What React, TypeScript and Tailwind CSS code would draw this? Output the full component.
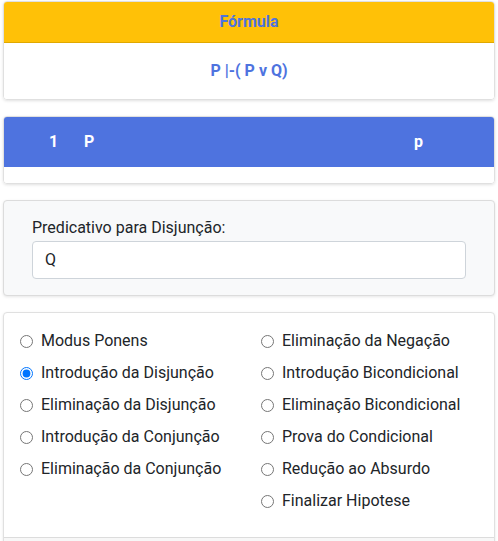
import React from "react";

const left = [
  "Modus Ponens",
  "Introdução da Disjunção",
  "Eliminação da Disjunção",
  "Introdução da Conjunção",
  "Eliminação da Conjunção",
];
const right = [
  "Eliminação da Negação",
  "Introdução Bicondicional",
  "Eliminação Bicondicional",
  "Prova do Condicional",
  "Redução ao Absurdo",
  "Finalizar Hipotese",
];

function Radio({ label, checked }: { label: string; checked?: boolean }) {
  return (
    <label className="flex items-center h-6">
      <input
        type="radio"
        name="regra"
        defaultChecked={checked}
        className="m-0 w-[13px] h-[13px] shrink-0"
      />
      <span className="ml-2 text-[16px] text-[#212529] leading-6">{label}</span>
    </label>
  );
}

export default function App() {
  return (
    <div
      className="bg-white w-[498px] h-[541px] overflow-hidden pt-px px-[3px] flex flex-col gap-4"
      style={{ fontFamily: "Roboto, 'Liberation Sans', sans-serif" }}
    >
      {/* Card 1 */}
      <div className="border border-[#e0e0e0] rounded-[4px] overflow-hidden shadow-[0_1px_3px_rgba(0,0,0,0.12)] shrink-0">
        <div className="h-[41px] bg-[#ffc107] border-b border-[#e0a800] flex items-center justify-center">
          <span className="font-bold text-[16px] text-[#4e73df]">Fórmula</span>
        </div>
        <div className="h-[56px] bg-white flex items-center justify-center">
          <span className="font-bold text-[16px] text-[#4e73df]">P |-( P v Q)</span>
        </div>
      </div>

      {/* Card 2 */}
      <div className="border border-[#e0e0e0] rounded-[4px] overflow-hidden shadow-[0_1px_3px_rgba(0,0,0,0.12)] shrink-0">
        <div className="h-[50px] bg-[#4e73df] flex items-center text-white font-bold text-[16px]">
          <span className="w-[80px] pl-[45px]">1</span>
          <span className="w-[330px]">P</span>
          <span>p</span>
        </div>
        <div className="h-[16px] bg-white" />
      </div>

      {/* Card 3 */}
      <div className="border border-[#dcdcdc] rounded-[4px] bg-[#f8f9fa] pt-[15px] pb-[16px] px-[28px] shadow-[0_1px_3px_rgba(0,0,0,0.1)] shrink-0">
        <div className="h-6 leading-6 text-[16px] text-[#212529]">Predicativo para Disjunção:</div>
        <div className="mt-px h-[38px] bg-white border border-[#ced4da] rounded-[4px] px-3 flex items-center text-[16px] text-[#212529]">
          Q
        </div>
      </div>

      {/* Card 4 */}
      <div className="border border-[#e0e0e0] rounded-[4px] bg-white shadow-[0_1px_3px_rgba(0,0,0,0.1)] shrink-0">
        <div className="pt-[16px] pb-[24px] pl-[16px] flex">
          <div className="w-[241px] flex flex-col gap-2">
            {left.map((l, i) => (
              <Radio key={l} label={l} checked={i === 1} />
            ))}
          </div>
          <div className="flex flex-col gap-2">
            {right.map((l) => (
              <Radio key={l} label={l} />
            ))}
          </div>
        </div>
        <div className="h-12 border-t border-[#dcdcdc] bg-[#f7f7f7]" />
      </div>
    </div>
  );
}
